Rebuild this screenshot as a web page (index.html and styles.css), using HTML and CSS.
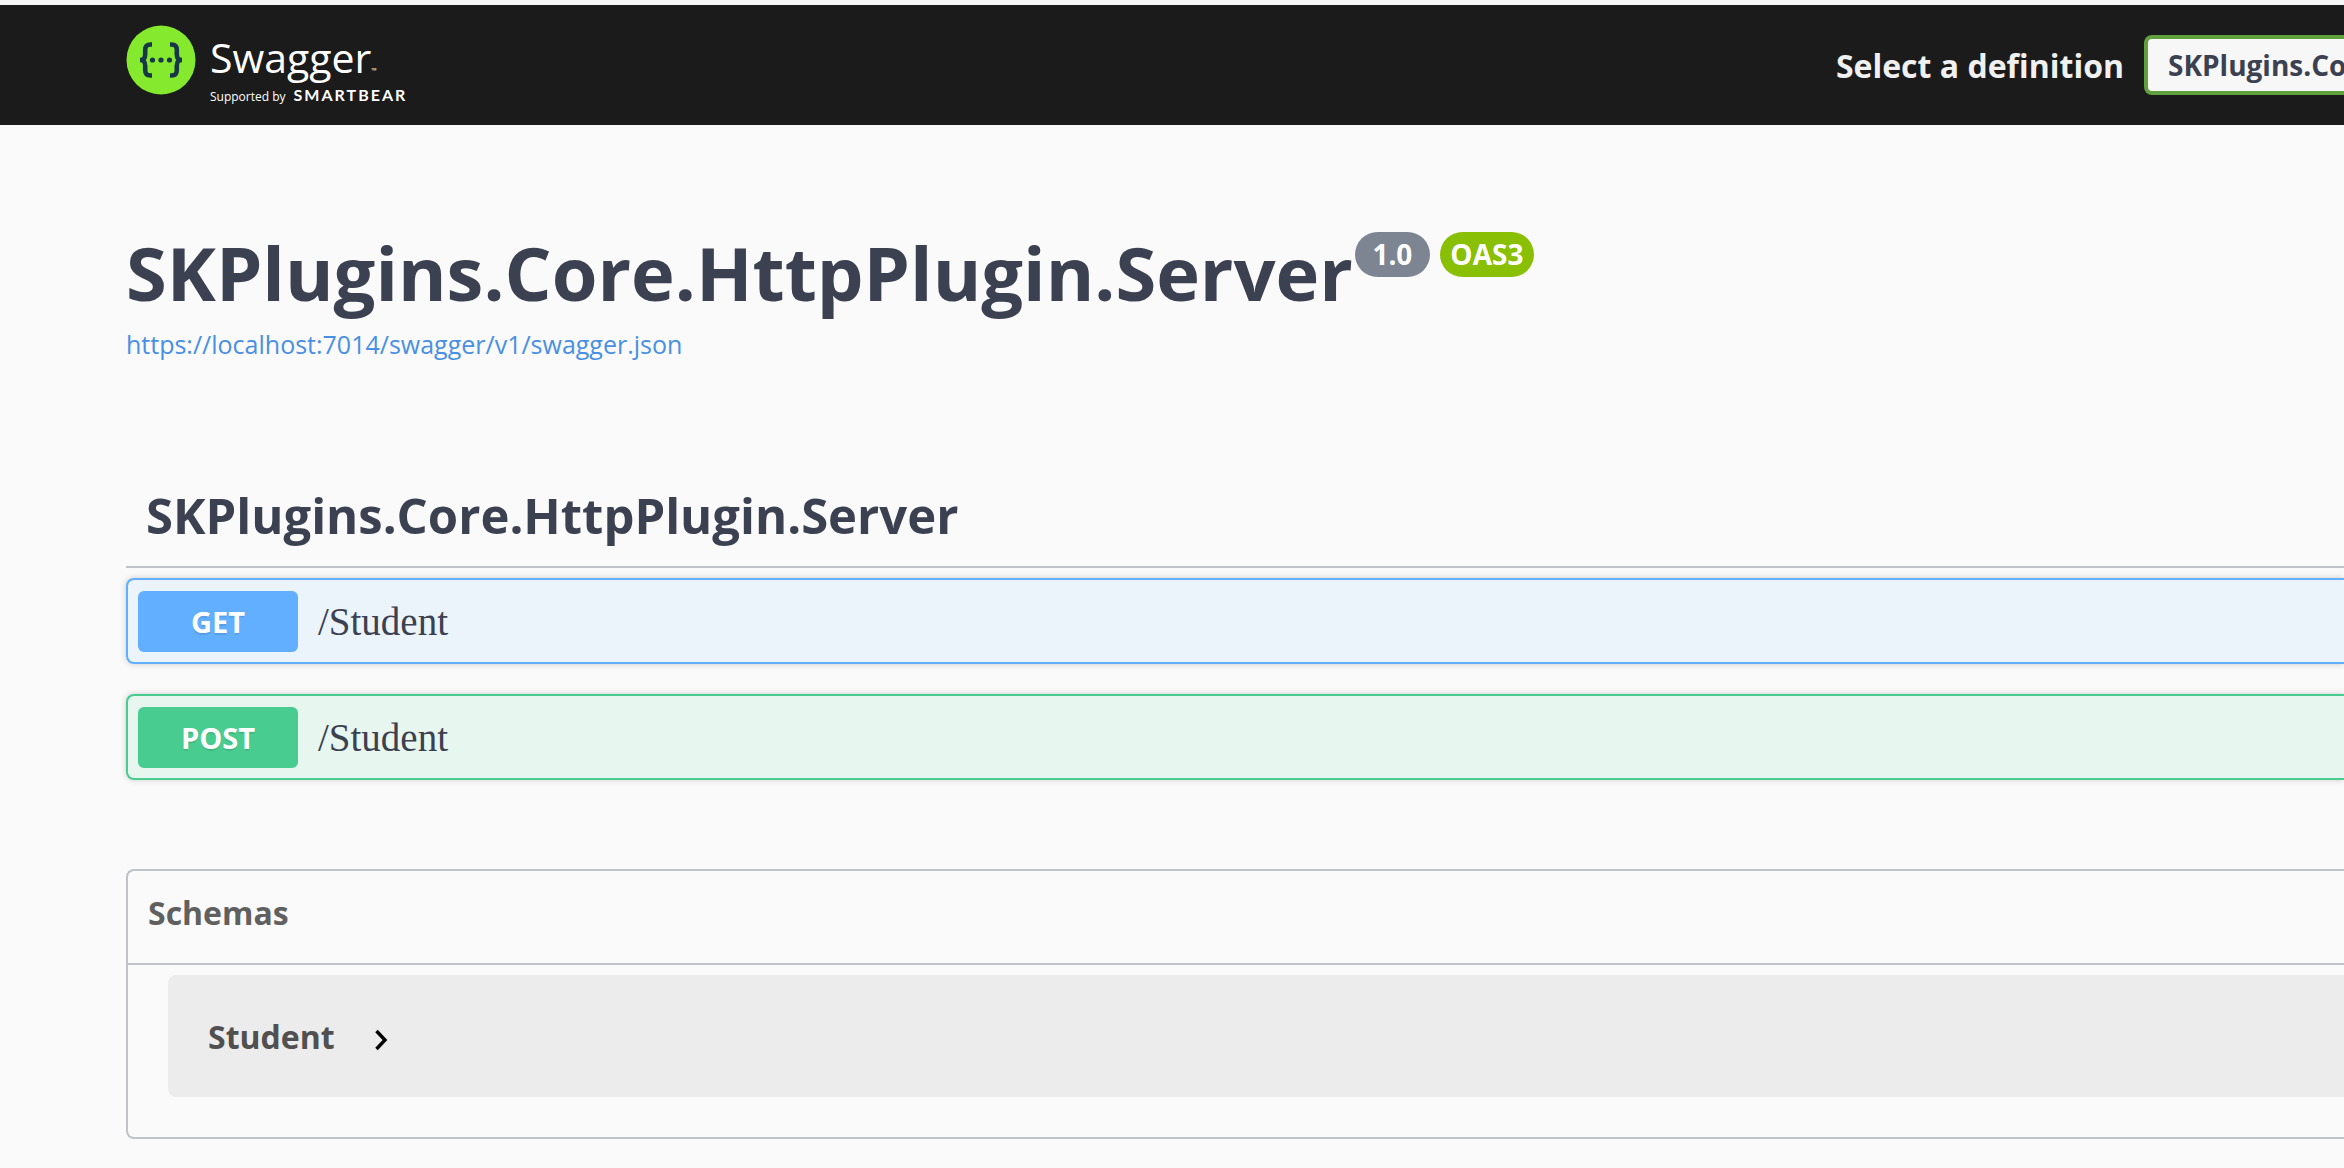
FILE: index.html
```html
<!DOCTYPE html>
<html lang="en">
<head>
<meta charset="utf-8">
<meta name="viewport" content="width=device-width, initial-scale=1">
<title>Swagger UI</title>
<link rel="stylesheet" href="styles.css">
</head>
<body>
<header class="topbar">
  <a class="logo" href="#" aria-label="Swagger, supported by SmartBear">
    <svg class="logo-mark" viewBox="0 0 70 70" aria-hidden="true">
      <circle cx="35" cy="35" r="34.500" fill="#85ea2d"/>
      <g fill="none" stroke="#173647" stroke-width="4.600">
        <path d="M26 19.500h-1.500c-4 0-5.300 1.800-5.300 5.500v4c0 3.700-1 6-5.200 6c4.200 0 5.200 2.300 5.200 6v4c0 3.700 1.300 5.500 5.300 5.500H26"/>
        <path d="M44 19.500h1.500c4 0 5.300 1.800 5.300 5.500v4c0 3.700 1 6 5.200 6c-4.200 0-5.200 2.300-5.200 6v4c0 3.700-1.300 5.500-5.300 5.500H44"/>
      </g>
      <g fill="#173647"><circle cx="26.500" cy="35" r="2.600"/><circle cx="35" cy="35" r="2.600"/><circle cx="43.500" cy="35" r="2.600"/></g>
    </svg>
    <span class="logo-text">
      <span class="logo-name">Swagger<small class="logo-tm">™</small></span>
      <span class="logo-by">Supported by <b class="logo-brand">SMARTBEAR</b></span>
    </span>
  </a>
  <form class="definition">
    <label class="definition-label" for="definition">Select a definition</label>
    <select class="definition-select" id="definition">
      <option>SKPlugins.Core.HttpPlugin.Server v1</option>
    </select>
  </form>
</header>
<main class="page">
  <section class="info">
    <div class="info-heading">
      <h1 class="title">SKPlugins.Core.HttpPlugin.Server</h1>
      <div class="badges">
        <span class="badge badge-version">1.0</span>
        <span class="badge badge-oas">OAS3</span>
      </div>
    </div>
    <a class="spec-link" href="#">https://localhost:7014/swagger/v1/swagger.json</a>
  </section>
  <section class="operations">
    <h2 class="tag">SKPlugins.Core.HttpPlugin.Server</h2>
    <div class="operation operation-get">
      <button class="method method-get" type="button">GET</button>
      <span class="path">/Student</span>
    </div>
    <div class="operation operation-post">
      <button class="method method-post" type="button">POST</button>
      <span class="path">/Student</span>
    </div>
  </section>
  <section class="schemas">
    <h2 class="schemas-title">Schemas</h2>
    <div class="schemas-body">
      <button class="schema" type="button">
        <span>Student</span>
        <svg class="chevron" viewBox="0 -7 14 29" aria-hidden="true"><path d="M1.500 2l8.500 9l-8.500 9" fill="none" stroke="#000" stroke-width="3.400"/></svg>
      </button>
    </div>
  </section>
</main>
</body>
</html>
```
FILE: styles.css
```css
* {
  box-sizing: border-box;
}

body {
  margin: 0;
  border-top: 5px solid #f7f7f7;
  background: #fafafa;
  color: #3b4151;
  font-family: "Open Sans", "Noto Sans", sans-serif;
  font-weight: 700;
}

h1,
h2 {
  margin: 0;
  font-weight: 700;
}

/* Top bar */
.topbar {
  display: flex;
  justify-content: space-between;
  align-items: center;
  height: 120px;
  padding-left: 126px;
  background: #1b1b1b;
}

.logo {
  display: flex;
  align-items: flex-start;
  gap: 14px;
  height: 80px;
  color: #fff;
  font-weight: 400;
  text-decoration: none;
}

.logo-mark {
  width: 70px;
  height: 70px;
}

.logo-text {
  display: flex;
  flex-direction: column;
  padding-top: 6px;
}

.logo-name {
  font-size: 41px;
  line-height: 52px;
}

.logo-tm {
  font-size: 7px;
  line-height: 7px;
}

.logo-by {
  display: flex;
  align-items: baseline;
  gap: 8px;
  font-size: 12px;
  line-height: 24px;
}

.logo-brand {
  font-family: Lato, sans-serif;
  font-size: 16px;
  letter-spacing: 2px;
}

.definition {
  display: flex;
  align-items: center;
  gap: 20px;
}

.definition-label {
  color: #f0f0f0;
  font-size: 32px;
}

.definition-select {
  width: 200px;
  height: 60px;
  padding: 0 0 0 20px;
  border: 4px solid #62a03f;
  border-right: 0;
  border-radius: 8px 0 0 8px;
  appearance: none;
  background: #f7f7f7;
  color: #3b4151;
  font: 700 28px "Open Sans", "Noto Sans", sans-serif;
}

/* API info */
.page {
  padding: 105px 0 28px 126px;
}

.info {
  margin-bottom: 96px;
}

.info-heading {
  display: flex;
  align-items: flex-start;
  gap: 2px;
  margin-bottom: 4px;
}

.title {
  font-size: 74px;
  line-height: 86px;
}

.badges {
  display: flex;
  gap: 10px;
  padding-top: 2px;
}

.badge {
  border-radius: 23px;
  color: #fff;
  font-size: 28px;
  line-height: 45px;
  text-align: center;
}

.badge-version {
  width: 75px;
  background: #7d8492;
}

.badge-oas {
  width: 94px;
  background: #89bf04;
}

.spec-link {
  display: block;
  color: #4990e2;
  font-size: 25px;
  font-weight: 400;
  line-height: 48px;
  text-decoration: none;
}

/* Operations */
.tag {
  margin-bottom: 10px;
  padding-left: 20px;
  border-bottom: 2px solid #c1c2c7;
  font-size: 49px;
  line-height: 102px;
}

.operation {
  display: flex;
  align-items: center;
  gap: 20px;
  height: 86px;
  margin-bottom: 30px;
  padding-left: 10px;
  border: 2px solid;
  border-right: 0;
  border-radius: 8px 0 0 8px;
  box-shadow: 0 0 6px rgba(0, 0, 0, 0.19);
}

.operation-get {
  border-color: #61affe;
  background: #ebf3fb;
}

.operation-post {
  border-color: #49cc90;
  background: #e8f6f0;
}

.method {
  width: 160px;
  height: 61px;
  padding: 0;
  border: 0;
  border-radius: 6px;
  color: #fff;
  font: 700 29px "Open Sans", "Noto Sans", sans-serif;
  text-shadow: 0 2px 0 rgba(0, 0, 0, 0.1);
}

.method-get {
  background: #61affe;
}

.method-post {
  background: #49cc90;
}

.path {
  font-family: "Liberation Serif", serif;
  font-size: 39px;
  font-weight: 400;
}

/* Schemas */
.schemas {
  margin-top: 89px;
  border: 2px solid #c1c2c7;
  border-right: 0;
  border-radius: 8px 0 0 8px;
}

.schemas-title {
  padding: 0 0 8px 20px;
  border-bottom: 2px solid #c1c2c7;
  color: #606060;
  font-size: 32px;
  line-height: 84px;
}

.schemas-body {
  padding: 10px 0 40px 40px;
}

.schema {
  display: flex;
  align-items: center;
  gap: 40px;
  width: 100%;
  height: 122px;
  padding: 0 0 0 40px;
  border: 0;
  border-radius: 8px 0 0 8px;
  background: #ececec;
  color: #505050;
  font: 700 32px "Open Sans", "Noto Sans", sans-serif;
}

.chevron {
  width: 14px;
  height: 29px;
}
```
